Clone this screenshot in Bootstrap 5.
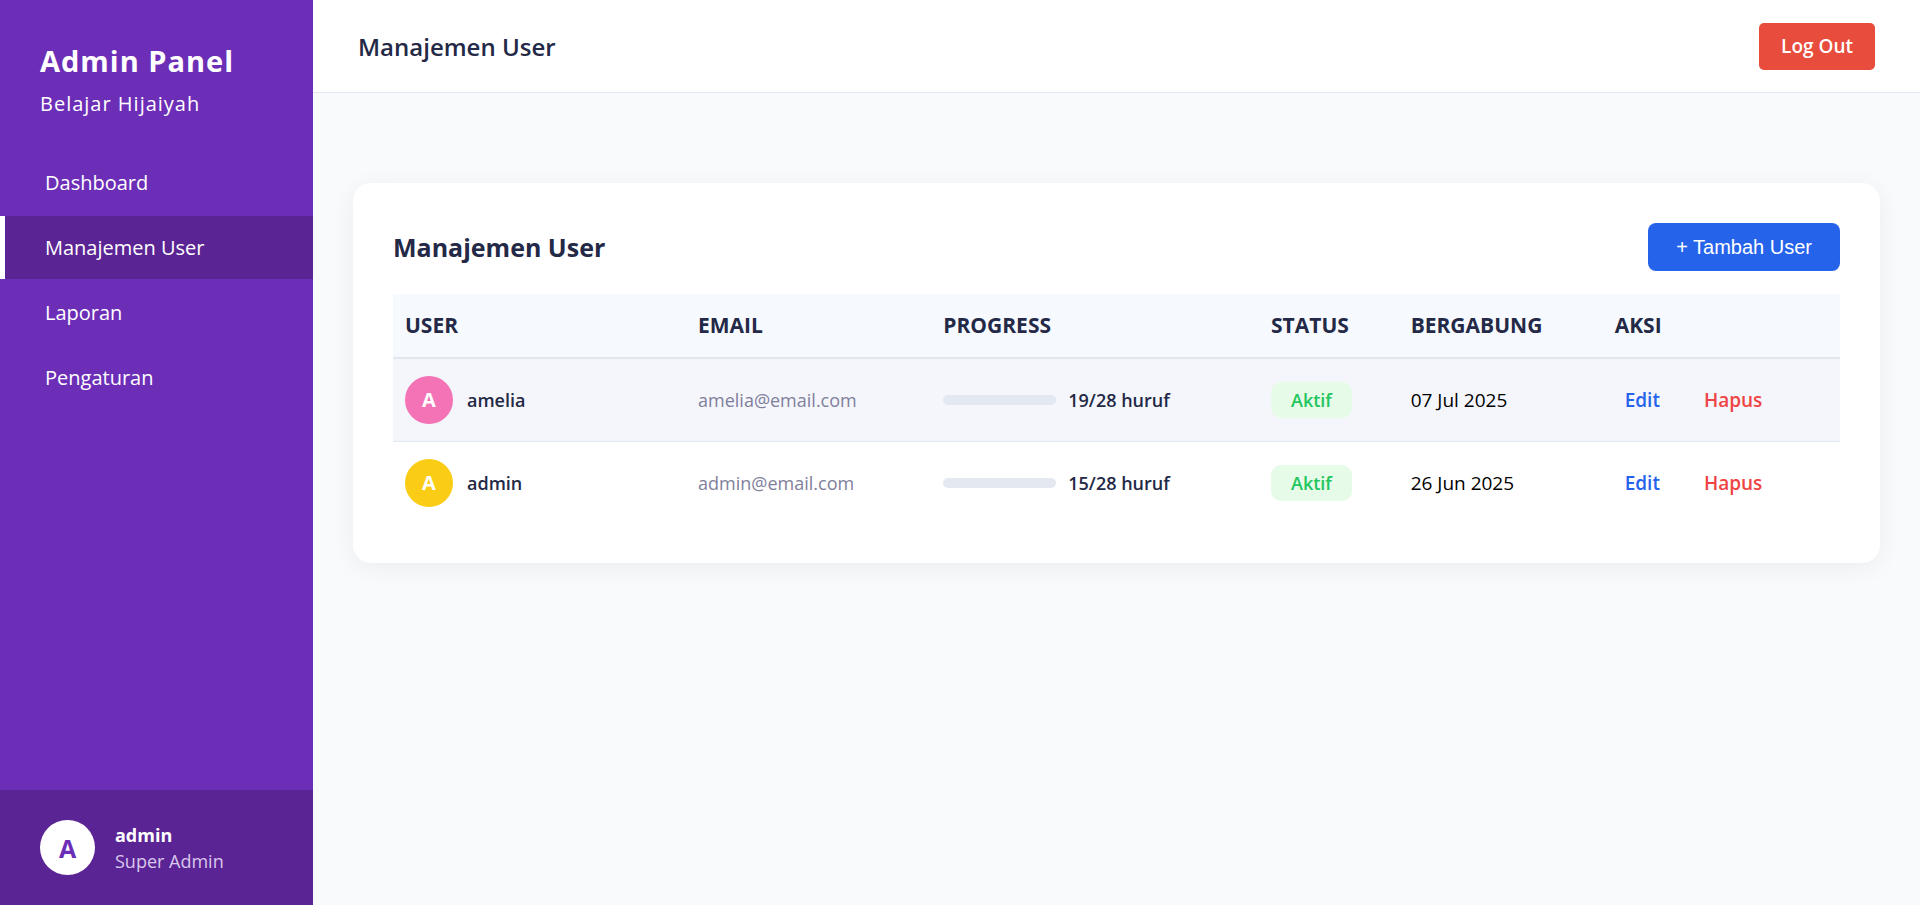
<!DOCTYPE html>
<html lang="id">
<head>
<meta charset="utf-8">
<meta name="viewport" content="width=device-width, initial-scale=1">
<title>Manajemen User - Admin Panel</title>
<link href="https://cdn.jsdelivr.net/npm/bootstrap@5.3.0/dist/css/bootstrap.min.css" rel="stylesheet">
<style>
  body { font-family: "Segoe UI", "Open Sans", "Noto Sans", sans-serif; font-size: 18px; line-height: 26px; background: #f8fafc; color: #232946; }
  .sidebar { width: 313px; background: #6c2eb7; color: #fff; }
  .brand { padding: 40px 40px 34px; letter-spacing: 1px; }
  .brand-title { font-size: 29px; line-height: 42px; font-weight: 700; }
  .brand-sub { font-size: 20px; line-height: 26px; margin-top: 9px; }
  .side-nav { gap: 2px; }
  .side-nav .nav-link { border-left: 5px solid transparent; padding: 16px 40px; font-size: 20px; line-height: 31px; color: #fff; }
  .side-nav .nav-link:hover, .side-nav .nav-link.active { background: #5b2494; border-left-color: #fff; }
  .profile { background: #5b2494; padding: 30px 40px; gap: 20px; }
  .avatar { width: 48px; height: 48px; font-size: 20px; font-weight: 700; color: #fff; }
  .avatar-lg { width: 55px; height: 55px; font-size: 25px; background: #fff; color: #6c2eb7; }
  .avatar-pink { background: #f472b6; }
  .avatar-yellow { background: #facc15; }
  .role { color: #d8c8ee; }
  .topbar { background: #fff; border-bottom: 1px solid #e2e4f0; padding: 23px 45px 22px; }
  .page-title { font-size: 24px; line-height: 32px; font-weight: 600; }
  .btn-logout { background: #e74c3c; color: #fff; font-size: 19px; font-weight: 600; line-height: 25px; padding: 11px 22px; border-radius: 5px; }
  .btn-logout:hover { background: #c0392b; color: #fff; }
  .content { padding: 90px 40px 40px; }
  .panel { background: #fff; border-radius: 18px; padding: 40px; box-shadow: 0 4px 24px rgba(0, 0, 0, .06); }
  .panel-title { font-size: 25px; line-height: 32px; font-weight: 700; }
  .btn-add { background: #2563eb; color: #fff; font-family: Arial, "Liberation Sans", sans-serif; font-size: 20px; line-height: 24px; padding: 12px 28px; border-radius: 8px; border: 0; }
  .btn-add:hover { background: #1d4ed8; color: #fff; }
  .user-table { table-layout: fixed; margin: 23px 0 0; --bs-table-bg: transparent; }
  .user-table th { background: #f6faff; color: #232946; font-size: 21px; line-height: 31px; font-weight: 700; padding: 16px 12px; border-bottom: 2px solid #e2e8f0; }
  .user-table td { padding: 17px 12px; border-bottom: 1px solid #e2e8f0; }
  .user-table tr:last-child td { border-bottom: 0; padding-bottom: 16px; }
  .user-table .row-highlight td { background: #f4f6fb; }
  .user-cell { gap: 14px; }
  .user-name, .count { color: #232946; font-weight: 600; }
  .user-table .email { color: #7f809b; }
  .user-table .joined { color: #000; font-size: 19px; }
  .track { flex: 0 0 113px; height: 10px; border-radius: 5px; background: #e3e8f1; }
  .status { display: inline-block; background: #e6fbe8; color: #22c55e; font-weight: 600; line-height: 26px; padding: 5px 20px; border-radius: 10px; }
  .action { font-size: 19px; font-weight: 600; text-decoration: none; padding: 0 10px; }
  .action-edit { color: #2563eb; }
  .action-delete { color: #ef4444; }
</style>
</head>
<body>
<div class="d-flex min-vh-100">
  <aside class="sidebar d-flex flex-column flex-shrink-0">
    <div class="brand">
      <div class="brand-title">Admin Panel</div>
      <div class="brand-sub">Belajar Hijaiyah</div>
    </div>
    <nav class="side-nav nav flex-column">
      <a class="nav-link" href="#">Dashboard</a>
      <a class="nav-link active" href="#" aria-current="page">Manajemen User</a>
      <a class="nav-link" href="#">Laporan</a>
      <a class="nav-link" href="#">Pengaturan</a>
    </nav>
    <div class="profile d-flex align-items-center mt-auto">
      <div class="avatar avatar-lg rounded-circle d-flex align-items-center justify-content-center">A</div>
      <div>
        <div class="fw-bold">admin</div>
        <div class="role">Super Admin</div>
      </div>
    </div>
  </aside>
  <div class="flex-grow-1">
    <header class="topbar d-flex align-items-center justify-content-between">
      <h1 class="page-title mb-0">Manajemen User</h1>
      <button type="button" class="btn btn-logout border-0">Log Out</button>
    </header>
    <main class="content">
      <section class="panel">
        <div class="d-flex align-items-center justify-content-between">
          <h2 class="panel-title mb-0">Manajemen User</h2>
          <button type="button" class="btn btn-add">+ Tambah User</button>
        </div>
        <table class="user-table table align-middle">
          <colgroup>
            <col style="width:20.25%"><col style="width:16.95%"><col style="width:22.65%"><col style="width:9.65%"><col style="width:14.1%"><col style="width:16.4%">
          </colgroup>
          <thead>
            <tr><th scope="col">USER</th><th scope="col">EMAIL</th><th scope="col">PROGRESS</th><th scope="col">STATUS</th><th scope="col">BERGABUNG</th><th scope="col">AKSI</th></tr>
          </thead>
          <tbody>
            <tr class="row-highlight">
              <td><div class="user-cell d-flex align-items-center"><span class="avatar avatar-pink rounded-circle d-flex align-items-center justify-content-center">A</span><span class="user-name">amelia</span></div></td>
              <td class="email">amelia@email.com</td>
              <td><div class="d-flex align-items-center"><div class="track me-2"></div><span class="count ms-1">19/28 huruf</span></div></td>
              <td><span class="status">Aktif</span></td>
              <td class="joined">07 Jul 2025</td>
              <td><div class="d-flex gap-4"><a class="action action-edit" href="#">Edit</a><a class="action action-delete" href="#">Hapus</a></div></td>
            </tr>
            <tr>
              <td><div class="user-cell d-flex align-items-center"><span class="avatar avatar-yellow rounded-circle d-flex align-items-center justify-content-center">A</span><span class="user-name">admin</span></div></td>
              <td class="email">admin@email.com</td>
              <td><div class="d-flex align-items-center"><div class="track me-2"></div><span class="count ms-1">15/28 huruf</span></div></td>
              <td><span class="status">Aktif</span></td>
              <td class="joined">26 Jun 2025</td>
              <td><div class="d-flex gap-4"><a class="action action-edit" href="#">Edit</a><a class="action action-delete" href="#">Hapus</a></div></td>
            </tr>
          </tbody>
        </table>
      </section>
    </main>
  </div>
</div>
<script src="https://cdn.jsdelivr.net/npm/bootstrap@5.3.0/dist/js/bootstrap.bundle.min.js"></script>
</body>
</html>
